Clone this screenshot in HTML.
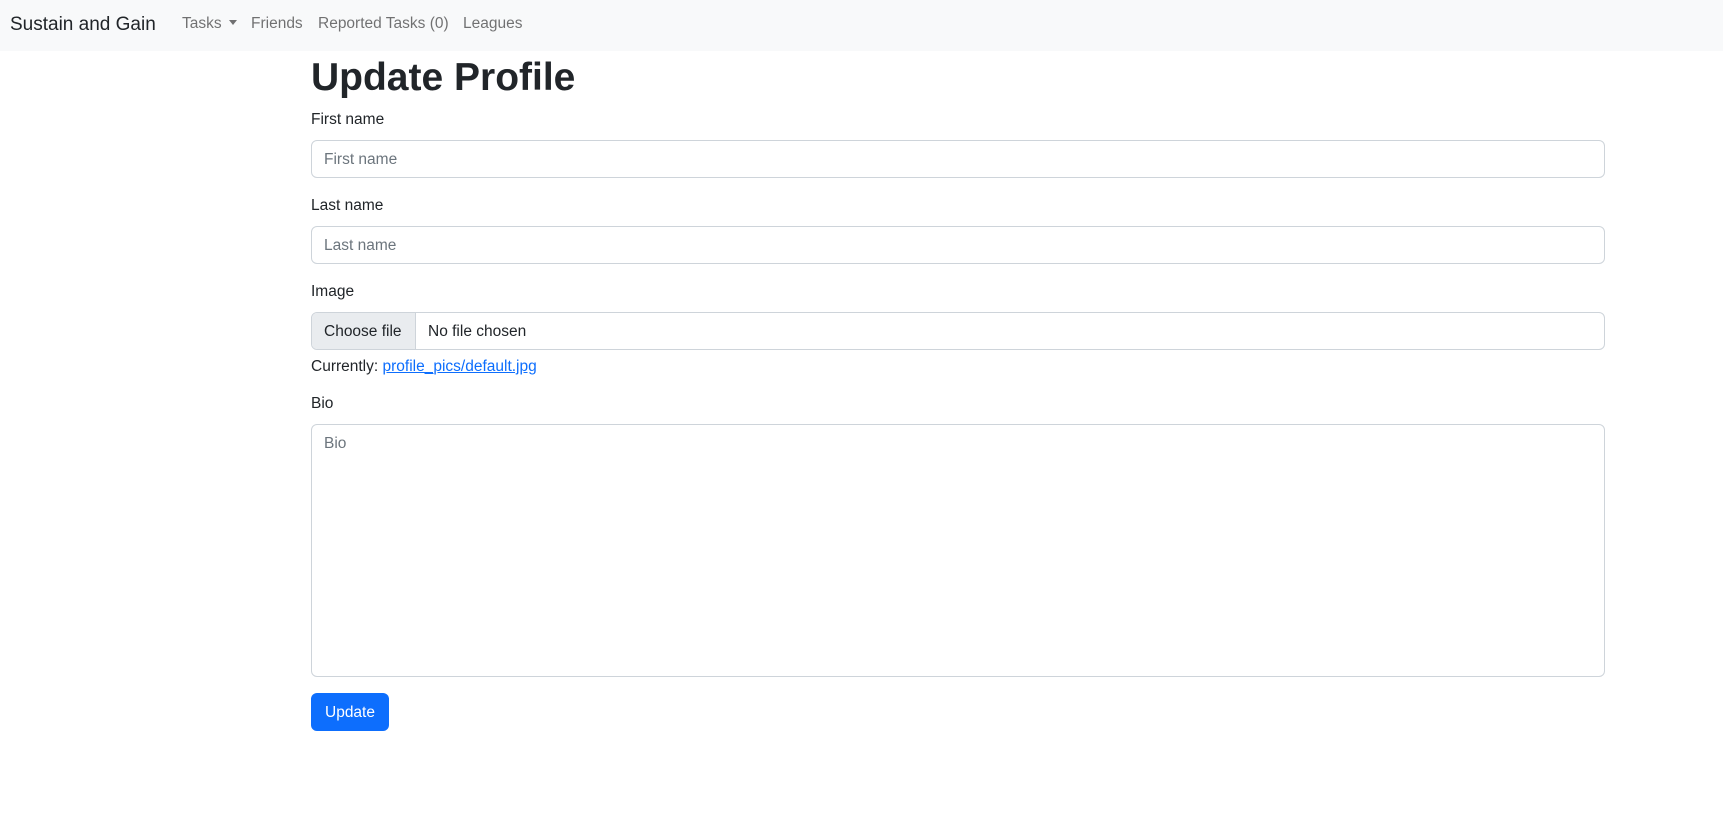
<!DOCTYPE html>
<html><head><meta charset="utf-8"><style>
*{box-sizing:border-box;margin:0;padding:0}
body{width:1723px;height:838px;background:#fff;font-family:"Liberation Sans",sans-serif;font-size:15.5px;color:#212529;line-height:24px;overflow:hidden;position:relative}
.nav{position:absolute;left:0;top:0;width:1723px;height:51px;background:#f8f9fa}
.brand{position:absolute;left:10px;top:10px;font-size:19px;line-height:30px;color:#212529}
.link{position:absolute;top:12px;color:rgba(0,0,0,.55)}
.caret{display:inline-block;margin-left:7px;vertical-align:3px;border-top:5px solid rgba(0,0,0,.55);border-left:4.5px solid transparent;border-right:4.5px solid transparent}
.main{position:absolute;left:311px;top:51px;width:1294px}
h1{font-size:39px;line-height:48px;font-weight:bold;margin-bottom:9px;padding-top:3px;height:48px}
label{display:block;margin-bottom:8px}
.inp{height:38px;border:1px solid #ced4da;border-radius:6px;padding:7px 12px;color:#6c757d;margin-bottom:16px}
.file{display:flex;height:38px;border:1px solid #ced4da;border-radius:6px;overflow:hidden;white-space:nowrap}
.file .btn{width:104px;background:#e9ecef;border-right:1px solid #ced4da;padding:7px 12px;color:#212529}
.file .t{padding:7px 12px}
a{color:#0d6efd;text-decoration:underline}
.ta{height:253px;border:1px solid #ced4da;border-radius:6px;padding:7px 12px;color:#6c757d;margin-bottom:16px}
.sub{display:inline-block;background:#0d6efd;color:#fff;border-radius:6px;padding:8px 12px;height:38px;width:78px;text-align:center}
</style></head><body>
<div class="nav">
<div class="brand">Sustain and Gain</div>
<div class="link" style="left:182px">Tasks<span class="caret"></span></div>
<div class="link" style="left:251px">Friends</div>
<div class="link" style="left:318px">Reported Tasks (0)</div>
<div class="link" style="left:463px">Leagues</div>
</div>
<div class="main">
<h1>Update Profile</h1>
<label>First name</label>
<div class="inp">First name</div>
<label>Last name</label>
<div class="inp">Last name</div>
<label>Image</label>
<div class="file"><div class="btn">Choose file</div><div class="t">No file chosen</div></div>
<div style="margin-top:5px;margin-bottom:13px">Currently: <a>profile_pics/default.jpg</a></div>
<label>Bio</label>
<div class="ta">Bio</div>
<div class="sub">Update</div>
</div>
</body></html>
